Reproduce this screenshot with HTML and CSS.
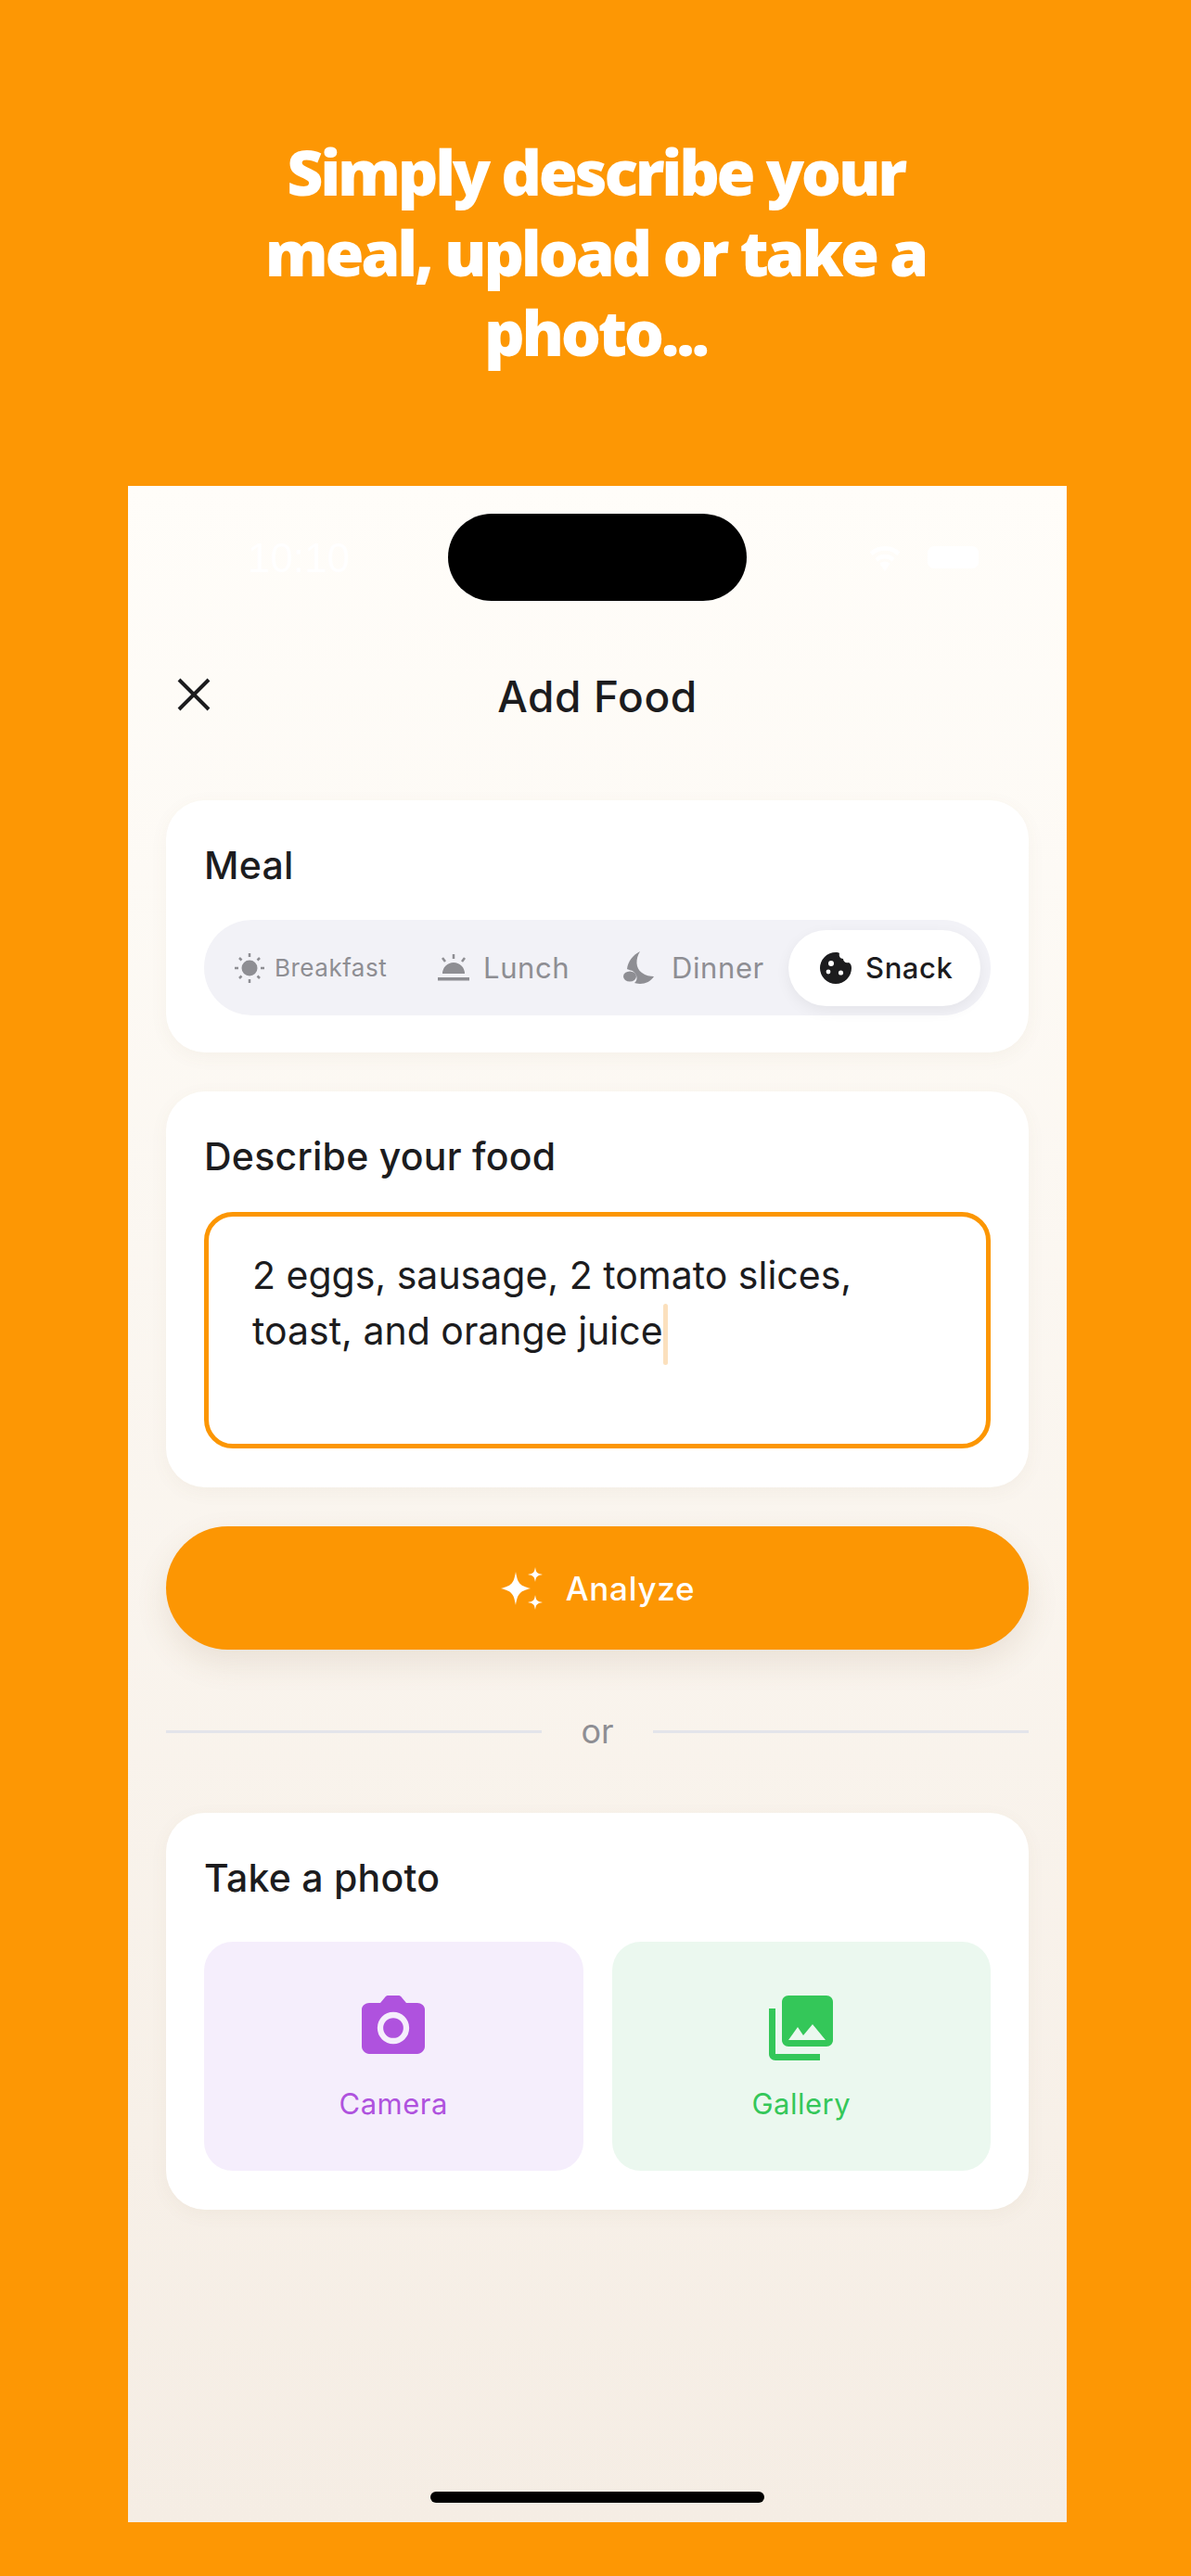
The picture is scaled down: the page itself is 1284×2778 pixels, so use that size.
FILE: index.html
```html
<!DOCTYPE html>
<html lang="en">
<head>
<meta charset="utf-8">
<title>Add Food</title>
<link rel="stylesheet" href="styles.css">
</head>
<body>
<header class="hero">
  <h1>Simply describe your<br>meal, upload or take a<br>photo...</h1>
</header>
<main class="phone">
  <div class="status">
    <span class="time">10:10</span>
    <div class="island"></div>
    <div class="status-icons">
      <svg class="wifi" viewBox="0 0 44 32" width="42" height="32"><path d="M22 32 16 23a9 9 0 0 1 12 0Z M11 17a16 16 0 0 1 22 0l-3 4a11 11 0 0 0-16 0Z M5 10a25 25 0 0 1 34 0l-3 4a20 20 0 0 0-28 0Z" fill="#fff"/></svg>
      <span class="battery"></span>
    </div>
  </div>
  <div class="nav">
    <svg class="close" viewBox="0 0 36 36" width="36" height="36"><path d="M2 2 34 34M34 2 2 34" stroke="#1c1c1e" stroke-width="4" fill="none"/></svg>
    <h2>Add Food</h2>
  </div>
  <section class="card meal">
    <h3>Meal</h3>
    <div class="segments">
      <div class="seg seg-b">
        <svg viewBox="0 0 32 32" width="32" height="32"><circle cx="16" cy="16" r="8.500" fill="#8e8e93"/><path d="M16 0v4M16 28v4M0 16h4M28 16h4M5 5l2.500 2.500M27 5l-2.500 2.500M5 27l2.500-2.500M27 27l-2.500-2.500" stroke="#8e8e93" stroke-width="2.500"/></svg>
        <span>Breakfast</span>
      </div>
      <div class="seg seg-l">
        <svg viewBox="0 0 34 30" width="34" height="30"><path d="M5 21a12 12 0 0 1 24 0Z M0 25h34v3.500H0Z" fill="#8e8e93"/><path d="M17 0v5M5 4l3 4M29 4l-3 4" stroke="#8e8e93" stroke-width="2.500"/></svg>
        <span>Lunch</span>
      </div>
      <div class="seg seg-d">
        <svg viewBox="0 0 34 36" width="34" height="36"><path d="M18 0C13 8 13 18 20 23 24 26 29 27 33 27 30 32 24 35 18 35 15 35 13 34 12 34 16 31 15 25 11 22 9 20 5 20 4 19 5 11 10 4 18 0Z" fill="#8e8e93"/><ellipse cx="7" cy="27" rx="7" ry="5.500" fill="#8e8e93"/></svg>
        <span>Dinner</span>
      </div>
      <div class="seg seg-s">
        <svg viewBox="0 0 34 34" width="34" height="34"><path d="M17 0C19 0 20 0 21 1 20 4 22 7 25 7 25 10 28 12 31 11 33 12 34 14 34 17A17 17 0 1 1 17 0Z" fill="#1c1c1e"/><circle cx="12" cy="12" r="3" fill="#fff"/><circle cx="9" cy="21" r="2.400" fill="#fff"/><circle cx="22.500" cy="22" r="2.600" fill="#fff"/></svg>
        <span>Snack</span>
      </div>
    </div>
  </section>
  <section class="card describe">
    <h3>Describe your food</h3>
    <div class="input">2 eggs, sausage, 2 tomato slices,<br>toast, and orange juice<span class="caret"></span></div>
  </section>
  <button class="analyze">
    <svg viewBox="0 0 46 46" width="46" height="46"><path d="M17 5C19 17 21 20 33 23 21 26 19 29 17 41 15 29 13 26 1 23 13 20 15 17 17 5Z M38 0C39 6 40 7 46 8 40 9 39 10 38 16 37 10 36 9 30 8 36 7 37 6 38 0Z M38 30C39 36 40 37 46 38 40 39 39 40 38 46 37 40 36 39 30 38 36 37 37 36 38 30Z" fill="#fff"/></svg>
    <span>Analyze</span>
  </button>
  <div class="divider"><i></i><span>or</span><i></i></div>
  <section class="card photo">
    <h3>Take a photo</h3>
    <div class="sources">
      <div class="source camera">
        <svg viewBox="0 0 70 70" width="70" height="70"><path d="M21 8 26 2C27 .6 28 0 30 0H40C42 0 43 .6 44 2L49 8H61C65 8 69 11 69 15V55C69 59 65 63 61 63H9C5 63 1 59 1 55V15C1 11 5 8 9 8Z" fill="#af52de"/><circle cx="35" cy="35" r="14" fill="none" stroke="#f5eefc" stroke-width="6.300"/></svg>
        <span>Camera</span>
      </div>
      <div class="source gallery">
        <svg viewBox="0 0 70 70" width="70" height="70"><path d="M21 0H62C66 0 69 3 69 7V48C69 52 66 55 62 55H21C17 55 14 52 14 48V7C14 3 17 0 21 0Z" fill="#34c759"/><path d="M0 14H7V63H55V70H7C3 70 0 67 0 63Z" fill="#34c759"/><path d="M21 48 31 34 37 43 47 31 61 48Z" fill="#ebf8ef"/></svg>
        <span>Gallery</span>
      </div>
    </div>
  </section>
  <div class="home"></div>
</main>
</body>
</html>
```

FILE: styles.css
```css
* { box-sizing: border-box; }
html, body { margin: 0; padding: 0; }
body {
  width: 1284px;
  height: 2778px;
  background: #fd9704;
  font-family: Inter, "Liberation Sans", sans-serif;
  overflow: hidden;
  display: flex;
  flex-direction: column;
}
.hero {
  flex: none;
  height: 524px;
  padding-top: 142px;
  text-align: center;
}
.hero h1 {
  margin: 0;
  color: #fff;
  font: 800 68px/86.5px "Open Sans", sans-serif;
  letter-spacing: -3.3px;
}
.phone {
  flex: none;
  width: 1012px;
  height: 2196px;
  margin-left: 138px;
  padding: 0 41px;
  background: linear-gradient(#fffdf9, #f5ede4);
  display: flex;
  flex-direction: column;
}
.status {
  flex: none;
  height: 94px;
  margin: 30px -41px 0;
  display: flex;
  justify-content: center;
  position: relative;
}
.island { width: 322px; height: 94px; background: #000; border-radius: 47px; }
.time {
  position: absolute;
  left: 129px;
  top: 26px;
  color: #fff;
  font: 400 44px/44px "Liberation Sans", sans-serif;
}
.status-icons {
  position: absolute;
  right: 95px;
  top: 31px;
  display: flex;
  align-items: center;
  gap: 25px;
}
.battery { width: 55px; height: 24px; background: #fff; border-radius: 7px; }
.nav {
  flex: none;
  height: 215px;
  margin: 0 -41px;
  padding-top: 73px;
  display: grid;
  grid-template-columns: 1fr auto 1fr;
  align-items: start;
}
.nav h2 {
  margin: 0;
  color: #1c1c1e;
  font-size: 46px;
  font-weight: 550;
  line-height: 60px;
  letter-spacing: .6px;
}
.close { margin: 10px 0 0 53px; }
.card {
  flex: none;
  background: #fff;
  border-radius: 42px;
  padding: 46px 41px 0;
  box-shadow: 0 5px 20px rgba(120, 90, 50, .05);
}
.card h3 {
  margin: 0;
  color: #1c1c1e;
  font-size: 41px;
  font-weight: 450;
  line-height: 48px;
  letter-spacing: .25px;
}
.meal { height: 272px; }
.segments {
  margin-top: 35px;
  height: 103px;
  padding: 10px;
  border-radius: 52px;
  background: #f2f2f7;
  display: flex;
  align-items: center;
}
.seg {
  height: 82px;
  display: flex;
  align-items: center;
  color: #8e8e93;
  font-size: 31px;
  letter-spacing: .6px;
}
.seg-b { width: 196px; padding-left: 23px; gap: 11px; font-size: 26px; letter-spacing: .5px; }
.seg-l { width: 206px; padding-left: 46px; gap: 15px; }
.seg-d { width: 218px; padding-left: 40px; gap: 18px; }
.seg-s {
  width: 207px;
  padding-left: 34px;
  gap: 15px;
  background: #fff;
  color: #1c1c1e;
  font-weight: 500;
  border-radius: 41px;
  box-shadow: 0 5px 16px rgba(0, 0, 0, .06);
}
.describe { margin-top: 42px; height: 427px; }
.input {
  margin-top: 36px;
  height: 255px;
  border: 5px solid #fc9603;
  border-radius: 31px;
  padding: 33px 47px;
  color: #1c1c1e;
  font-size: 41px;
  line-height: 60px;
}
.caret {
  display: inline-block;
  width: 5px;
  height: 66px;
  margin: -3px 0;
  border-radius: 2.500px;
  background: #fbe0bd;
  vertical-align: middle;
}
.analyze {
  flex: none;
  margin-top: 42px;
  height: 133px;
  border: 0;
  border-radius: 67px;
  background: #fc9603;
  color: #fff;
  display: flex;
  align-items: center;
  justify-content: center;
  gap: 25px;
  font: 500 35px Inter, sans-serif;
  letter-spacing: .7px;
  box-shadow: 0 14px 34px rgba(120, 90, 50, .12);
}
.divider {
  flex: none;
  margin-top: 58px;
  height: 60px;
  display: flex;
  align-items: center;
  gap: 42px;
  color: #8e8e93;
  font-size: 36px;
}
.divider i { flex: 1; height: 3px; background: #e3e4ea; }
.photo { margin-top: 58px; height: 428px; padding-top: 46px; }
.sources { margin-top: 45px; display: flex; gap: 31px; }
.source {
  flex: 1;
  height: 247px;
  padding-top: 58px;
  border-radius: 31px;
  display: flex;
  flex-direction: column;
  align-items: center;
  gap: 27px;
  font-size: 31px;
  line-height: 40px;
  letter-spacing: .5px;
}
.camera { background: #f5eefc; color: #af52de; }
.gallery { background: #ebf8ef; color: #34c759; }
.home {
  flex: none;
  align-self: center;
  width: 360px;
  height: 12px;
  margin-top: auto;
  margin-bottom: 21px;
  border-radius: 6px;
  background: #000;
}
```
